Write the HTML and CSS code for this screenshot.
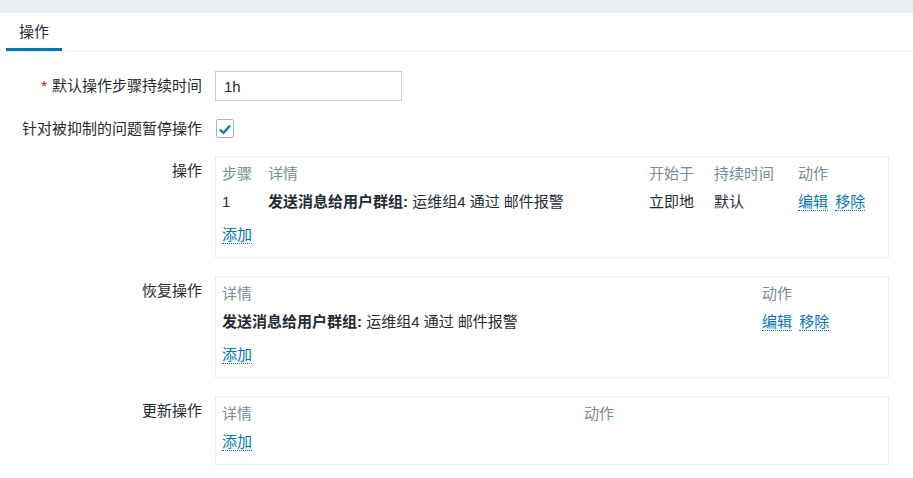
FILE: index.html
```html
<!DOCTYPE html>
<html lang="zh-CN">
<head>
  <meta charset="UTF-8">
  <title>操作</title>
  <link rel="stylesheet" href="styles.css">
</head>
<body>
  <div class="topbar"></div>

  <div class="tabs">
    <div class="tab active">操作</div>
  </div>

  <div class="form">
    <div class="row center">
      <div class="label"><span class="req">*</span>默认操作步骤持续时间</div>
      <div class="field"><input type="text" class="text-input" value="1h"></div>
    </div>

    <div class="row center">
      <div class="label">针对被抑制的问题暂停操作</div>
      <div class="field">
        <span class="checkbox">
          <svg width="14" height="12" viewBox="0 0 14 12"><polyline points="2,6.5 5.5,10 12,2.5" fill="none" stroke="#0275b8" stroke-width="2.2"/></svg>
        </span>
      </div>
    </div>

    <div class="row">
      <div class="label top">操作</div>
      <div class="field">
        <div class="box">
          <table>
            <tr>
              <th class="w-step">步骤</th>
              <th class="w-detail">详情</th>
              <th class="w-start">开始于</th>
              <th class="w-dur">持续时间</th>
              <th>动作</th>
            </tr>
            <tr>
              <td>1</td>
              <td><b>发送消息给用户群组:</b> 运维组4 通过 邮件报警</td>
              <td>立即地</td>
              <td>默认</td>
              <td><a class="link">编辑</a> <a class="link gap">移除</a></td>
            </tr>
          </table>
          <div class="add"><a class="link">添加</a></div>
        </div>
      </div>
    </div>

    <div class="row">
      <div class="label top">恢复操作</div>
      <div class="field">
        <div class="box">
          <table>
            <tr>
              <th class="w-recovery">详情</th>
              <th>动作</th>
            </tr>
            <tr>
              <td><b>发送消息给用户群组:</b> 运维组4 通过 邮件报警</td>
              <td><a class="link">编辑</a> <a class="link gap">移除</a></td>
            </tr>
          </table>
          <div class="add"><a class="link">添加</a></div>
        </div>
      </div>
    </div>

    <div class="row">
      <div class="label top">更新操作</div>
      <div class="field">
        <div class="box">
          <table>
            <tr>
              <th class="w-update">详情</th>
              <th>动作</th>
            </tr>
          </table>
          <div class="add"><a class="link">添加</a></div>
        </div>
      </div>
    </div>
  </div>
</body>
</html>
```

FILE: styles.css
```css
* { box-sizing: border-box; }
body {
  margin: 0;
  font-family: "Liberation Sans", "Noto Sans CJK SC", sans-serif;
  font-size: 15px;
  line-height: 18px;
  color: #1f2c33;
  background: #fff;
}
.topbar {
  height: 13px;
  background: #ebeef0;
}
.tabs {
  display: flex;
  padding-left: 6px;
  border-bottom: 1px solid #ebeef0;
}
.tab {
  height: 38px;
  padding: 10px 13px 0;
  border-bottom: 3px solid transparent;
}
.tab.active { border-bottom-color: #0275b8; }

.form { padding: 19px 24px 0 0; }
.row {
  display: flex;
  gap: 13px;
  margin-bottom: 18px;
}
.row.center { align-items: center; }
.label {
  width: 202px;
  flex-shrink: 0;
  text-align: right;
}
.label.top { padding-top: 6px; }
.req {
  color: #d40000;
  margin-right: 5px;
}
.field { flex: 1; }

.text-input {
  width: 187px;
  height: 30px;
  padding: 0 8px;
  border: 1px solid #c5cdd2;
  font: inherit;
  color: #1f2c33;
  outline: none;
}
.checkbox {
  display: flex;
  align-items: center;
  justify-content: center;
  width: 18px;
  height: 19px;
  margin-left: 1px;
  border: 1px solid #adb8be;
  border-radius: 2px;
}

.box {
  border: 1px solid #ebeef0;
  padding: 3px 6px 8px;
}
table {
  width: 100%;
  border-collapse: collapse;
  table-layout: fixed;
}
th, td {
  padding: 0;
  text-align: left;
  vertical-align: top;
  white-space: nowrap;
}
th {
  font-weight: normal;
  color: #768d99;
  padding: 5px 0;
}
td { padding: 5px 0 10px; }
.w-step { width: 46px; }
.w-detail { width: 381px; }
.w-start { width: 65px; }
.w-dur { width: 84px; }
.w-recovery { width: 540px; }
.w-update { width: 362px; }

.link {
  color: #0275b8;
  border-bottom: 1px dotted #0275b8;
  cursor: pointer;
}
.link.gap { margin-left: 3px; }
.add { padding: 5px 0; }
```
